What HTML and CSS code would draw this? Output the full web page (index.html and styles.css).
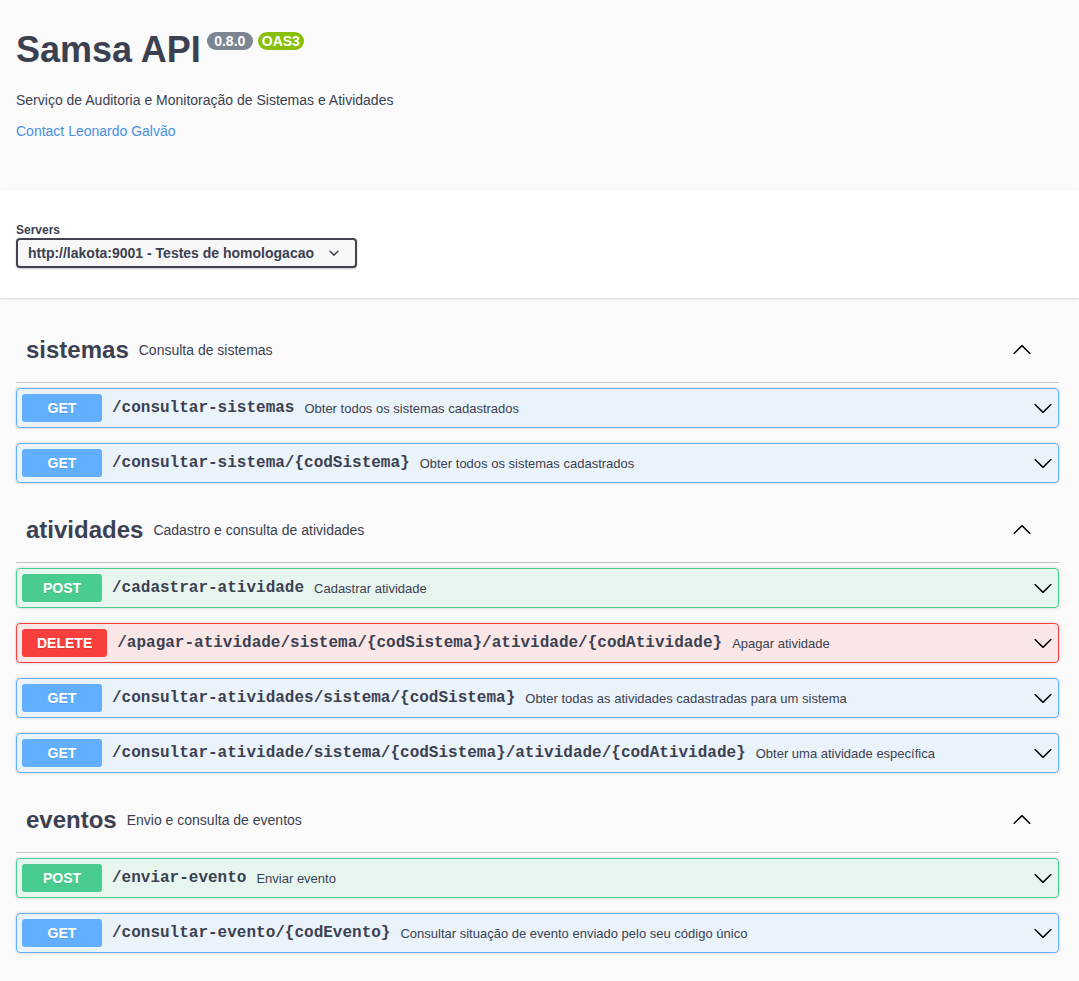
FILE: index.html
```html
<!DOCTYPE html>
<html lang="pt">
<head>
<meta charset="utf-8">
<title>Samsa API</title>
<link rel="stylesheet" href="styles.css">
</head>
<body>
<div class="info-wrap">
  <div class="info">
    <h2 class="title"><span>Samsa API</span><small class="badge version">0.8.0</small><small class="badge stamp">OAS3</small></h2>
    <p class="desc">Serviço de Auditoria e Monitoração de Sistemas e Atividades</p>
    <a class="contact" href="#">Contact Leonardo Galvão</a>
  </div>
</div>

<div class="scheme-container">
  <div class="servers">
    <span class="servers-title">Servers</span>
    <div class="select">
      <span>http://lakota:9001 - Testes de homologacao</span>
      <svg class="select-arrow" viewBox="0 0 20 20" width="20" height="20"><path d="M13.418 7.859a.695.695 0 01.978 0 .68.68 0 010 .969l-3.908 3.83a.697.697 0 01-.979 0l-3.908-3.830a.68.68 0 010-.969.695.695 0 01.978 0L10 11l3.418-3.141z"/></svg>
    </div>
  </div>
</div>

<div class="wrapper">
  <section class="tag-section">
    <h3 class="tag"><span class="tag-name">sistemas</span><small class="tag-desc">Consulta de sistemas</small>
      <svg class="tag-arrow" viewBox="0 0 20 20" width="20" height="20"><path d="M17.418 14.908c.272.268.709.268.979 0s.271-.701 0-.969l-7.908-7.83c-.27-.268-.707-.268-.979 0l-7.908 7.83c-.27.268-.27.701 0 .969.271.268.709.268.979 0L10 7.767l7.418 7.141z"/></svg>
    </h3>
    <div class="op get"><span class="method">GET</span><span class="path">/consultar-sistemas</span><span class="summary">Obter todos os sistemas cadastrados</span><svg class="op-arrow" viewBox="0 0 20 20" width="20" height="20"><path d="M17.418 6.109c.272-.268.709-.268.979 0s.271.701 0 .969l-7.908 7.83c-.27.268-.707.268-.979 0l-7.908-7.83c-.27-.268-.27-.701 0-.969.271-.268.709-.268.979 0L10 13.25l7.418-7.141z"/></svg></div>
    <div class="op get"><span class="method">GET</span><span class="path">/consultar-sistema/{codSistema}</span><span class="summary">Obter todos os sistemas cadastrados</span><svg class="op-arrow" viewBox="0 0 20 20" width="20" height="20"><path d="M17.418 6.109c.272-.268.709-.268.979 0s.271.701 0 .969l-7.908 7.83c-.27.268-.707.268-.979 0l-7.908-7.83c-.27-.268-.27-.701 0-.969.271-.268.709-.268.979 0L10 13.25l7.418-7.141z"/></svg></div>
  </section>

  <section class="tag-section">
    <h3 class="tag"><span class="tag-name">atividades</span><small class="tag-desc">Cadastro e consulta de atividades</small>
      <svg class="tag-arrow" viewBox="0 0 20 20" width="20" height="20"><path d="M17.418 14.908c.272.268.709.268.979 0s.271-.701 0-.969l-7.908-7.83c-.27-.268-.707-.268-.979 0l-7.908 7.83c-.27.268-.27.701 0 .969.271.268.709.268.979 0L10 7.767l7.418 7.141z"/></svg>
    </h3>
    <div class="op post"><span class="method">POST</span><span class="path">/cadastrar-atividade</span><span class="summary">Cadastrar atividade</span><svg class="op-arrow" viewBox="0 0 20 20" width="20" height="20"><path d="M17.418 6.109c.272-.268.709-.268.979 0s.271.701 0 .969l-7.908 7.83c-.27.268-.707.268-.979 0l-7.908-7.83c-.27-.268-.27-.701 0-.969.271-.268.709-.268.979 0L10 13.25l7.418-7.141z"/></svg></div>
    <div class="op delete"><span class="method">DELETE</span><span class="path">/apagar-atividade/sistema/{codSistema}/atividade/{codAtividade}</span><span class="summary">Apagar atividade</span><svg class="op-arrow" viewBox="0 0 20 20" width="20" height="20"><path d="M17.418 6.109c.272-.268.709-.268.979 0s.271.701 0 .969l-7.908 7.83c-.27.268-.707.268-.979 0l-7.908-7.83c-.27-.268-.27-.701 0-.969.271-.268.709-.268.979 0L10 13.25l7.418-7.141z"/></svg></div>
    <div class="op get"><span class="method">GET</span><span class="path">/consultar-atividades/sistema/{codSistema}</span><span class="summary">Obter todas as atividades cadastradas para um sistema</span><svg class="op-arrow" viewBox="0 0 20 20" width="20" height="20"><path d="M17.418 6.109c.272-.268.709-.268.979 0s.271.701 0 .969l-7.908 7.83c-.27.268-.707.268-.979 0l-7.908-7.83c-.27-.268-.27-.701 0-.969.271-.268.709-.268.979 0L10 13.25l7.418-7.141z"/></svg></div>
    <div class="op get"><span class="method">GET</span><span class="path">/consultar-atividade/sistema/{codSistema}/atividade/{codAtividade}</span><span class="summary">Obter uma atividade específica</span><svg class="op-arrow" viewBox="0 0 20 20" width="20" height="20"><path d="M17.418 6.109c.272-.268.709-.268.979 0s.271.701 0 .969l-7.908 7.83c-.27.268-.707.268-.979 0l-7.908-7.83c-.27-.268-.27-.701 0-.969.271-.268.709-.268.979 0L10 13.25l7.418-7.141z"/></svg></div>
  </section>

  <section class="tag-section">
    <h3 class="tag"><span class="tag-name">eventos</span><small class="tag-desc">Envio e consulta de eventos</small>
      <svg class="tag-arrow" viewBox="0 0 20 20" width="20" height="20"><path d="M17.418 14.908c.272.268.709.268.979 0s.271-.701 0-.969l-7.908-7.83c-.27-.268-.707-.268-.979 0l-7.908 7.83c-.27.268-.27.701 0 .969.271.268.709.268.979 0L10 7.767l7.418 7.141z"/></svg>
    </h3>
    <div class="op post"><span class="method">POST</span><span class="path">/enviar-evento</span><span class="summary">Enviar evento</span><svg class="op-arrow" viewBox="0 0 20 20" width="20" height="20"><path d="M17.418 6.109c.272-.268.709-.268.979 0s.271.701 0 .969l-7.908 7.83c-.27.268-.707.268-.979 0l-7.908-7.83c-.27-.268-.27-.701 0-.969.271-.268.709-.268.979 0L10 13.25l7.418-7.141z"/></svg></div>
    <div class="op get"><span class="method">GET</span><span class="path">/consultar-evento/{codEvento}</span><span class="summary">Consultar situação de evento enviado pelo seu código único</span><svg class="op-arrow" viewBox="0 0 20 20" width="20" height="20"><path d="M17.418 6.109c.272-.268.709-.268.979 0s.271.701 0 .969l-7.908 7.83c-.27.268-.707.268-.979 0l-7.908-7.83c-.27-.268-.27-.701 0-.969.271-.268.709-.268.979 0L10 13.25l7.418-7.141z"/></svg></div>
  </section>
</div>
</body>
</html>
```

FILE: styles.css
```css
* { box-sizing: border-box; }

html, body {
  margin: 0;
  padding: 0;
  background: #fafafa;
  color: #3b4151;
  font-family: "Liberation Sans", Arial, Helvetica, sans-serif;
}

.info-wrap {
  padding: 28px 20px 49px 16px;
}

.title {
  display: flex;
  align-items: flex-start;
  margin: 0;
  font-size: 36px;
  line-height: 44px;
  font-weight: 700;
  color: #3b4151;
}

.badge {
  display: inline-block;
  min-width: 46px;
  margin-top: 4px;
  padding: 2px 4px;
  border-radius: 57px;
  color: #fff;
  font-size: 14px;
  line-height: 14px;
  font-weight: 700;
  text-align: center;
}

.badge.version {
  margin-left: 6px;
  background: #7d8492;
}

.badge.stamp {
  margin-left: 5px;
  background: #89bf04;
}

.desc {
  margin: 18px 0 11px;
  font-size: 14px;
  line-height: 20px;
}

.contact {
  display: block;
  font-size: 14px;
  line-height: 20px;
  color: #4990e2;
  text-decoration: none;
}

.scheme-container {
  background: #fff;
  box-shadow: 0 1px 2px 0 rgba(0, 0, 0, 0.15);
  padding: 33px 20px 30px 16px;
}

.servers {
  display: flex;
  flex-direction: column;
  align-items: flex-start;
}

.servers-title {
  font-size: 12px;
  line-height: 15px;
  font-weight: 700;
}

.select {
  display: flex;
  align-items: center;
  height: 30px;
  padding: 0 11px 0 10px;
  border: 2px solid #41444e;
  border-radius: 4px;
  background: #f7f7f7;
  box-shadow: 0 1px 2px 0 rgba(0, 0, 0, 0.25);
  font-size: 14px;
  font-weight: 700;
  color: #3b4151;
}

.select-arrow {
  margin-left: 10px;
  fill: #3b4151;
}

.wrapper {
  padding: 20px 20px 40px 16px;
}

.tag-section {
  display: flex;
  flex-direction: column;
}

.tag {
  display: flex;
  align-items: center;
  height: 65px;
  margin: 0 0 5px;
  padding: 0 20px 0 10px;
  border-bottom: 1px solid rgba(59, 65, 81, 0.3);
  font-size: 24px;
  font-weight: 700;
  color: #3b4151;
}

.tag-desc {
  flex: 1;
  padding: 0 10px;
  font-size: 14px;
  font-weight: 400;
}

.tag-arrow {
  margin-right: 7px;
  margin-bottom: 2px;
  fill: #000;
}

.op {
  display: flex;
  align-items: center;
  height: 40px;
  margin: 0 0 15px;
  padding: 5px;
  border: 1px solid;
  border-radius: 4px;
  box-shadow: 0 0 3px rgba(0, 0, 0, 0.19);
}

.method {
  min-width: 80px;
  padding: 6px 15px;
  border-radius: 3px;
  color: #fff;
  font-size: 14px;
  line-height: 16px;
  font-weight: 700;
  text-align: center;
  text-shadow: 0 1px 0 rgba(0, 0, 0, 0.1);
}

.path {
  padding: 0 10px;
  font-family: "Liberation Mono", "Courier New", monospace;
  font-size: 16px;
  font-weight: 700;
  color: #3b4151;
  white-space: nowrap;
}

.summary {
  flex: 1;
  font-size: 13px;
  color: #3b4151;
  white-space: nowrap;
}

.op-arrow {
  fill: #000;
}

.op.get { background: rgba(97, 175, 254, 0.1); border-color: #61affe; }
.op.get .method { background: #61affe; }

.op.post { background: rgba(73, 204, 144, 0.1); border-color: #49cc90; }
.op.post .method { background: #49cc90; }

.op.delete { background: rgba(249, 62, 62, 0.1); border-color: #f93e3e; }
.op.delete .method { background: #f93e3e; }
```
